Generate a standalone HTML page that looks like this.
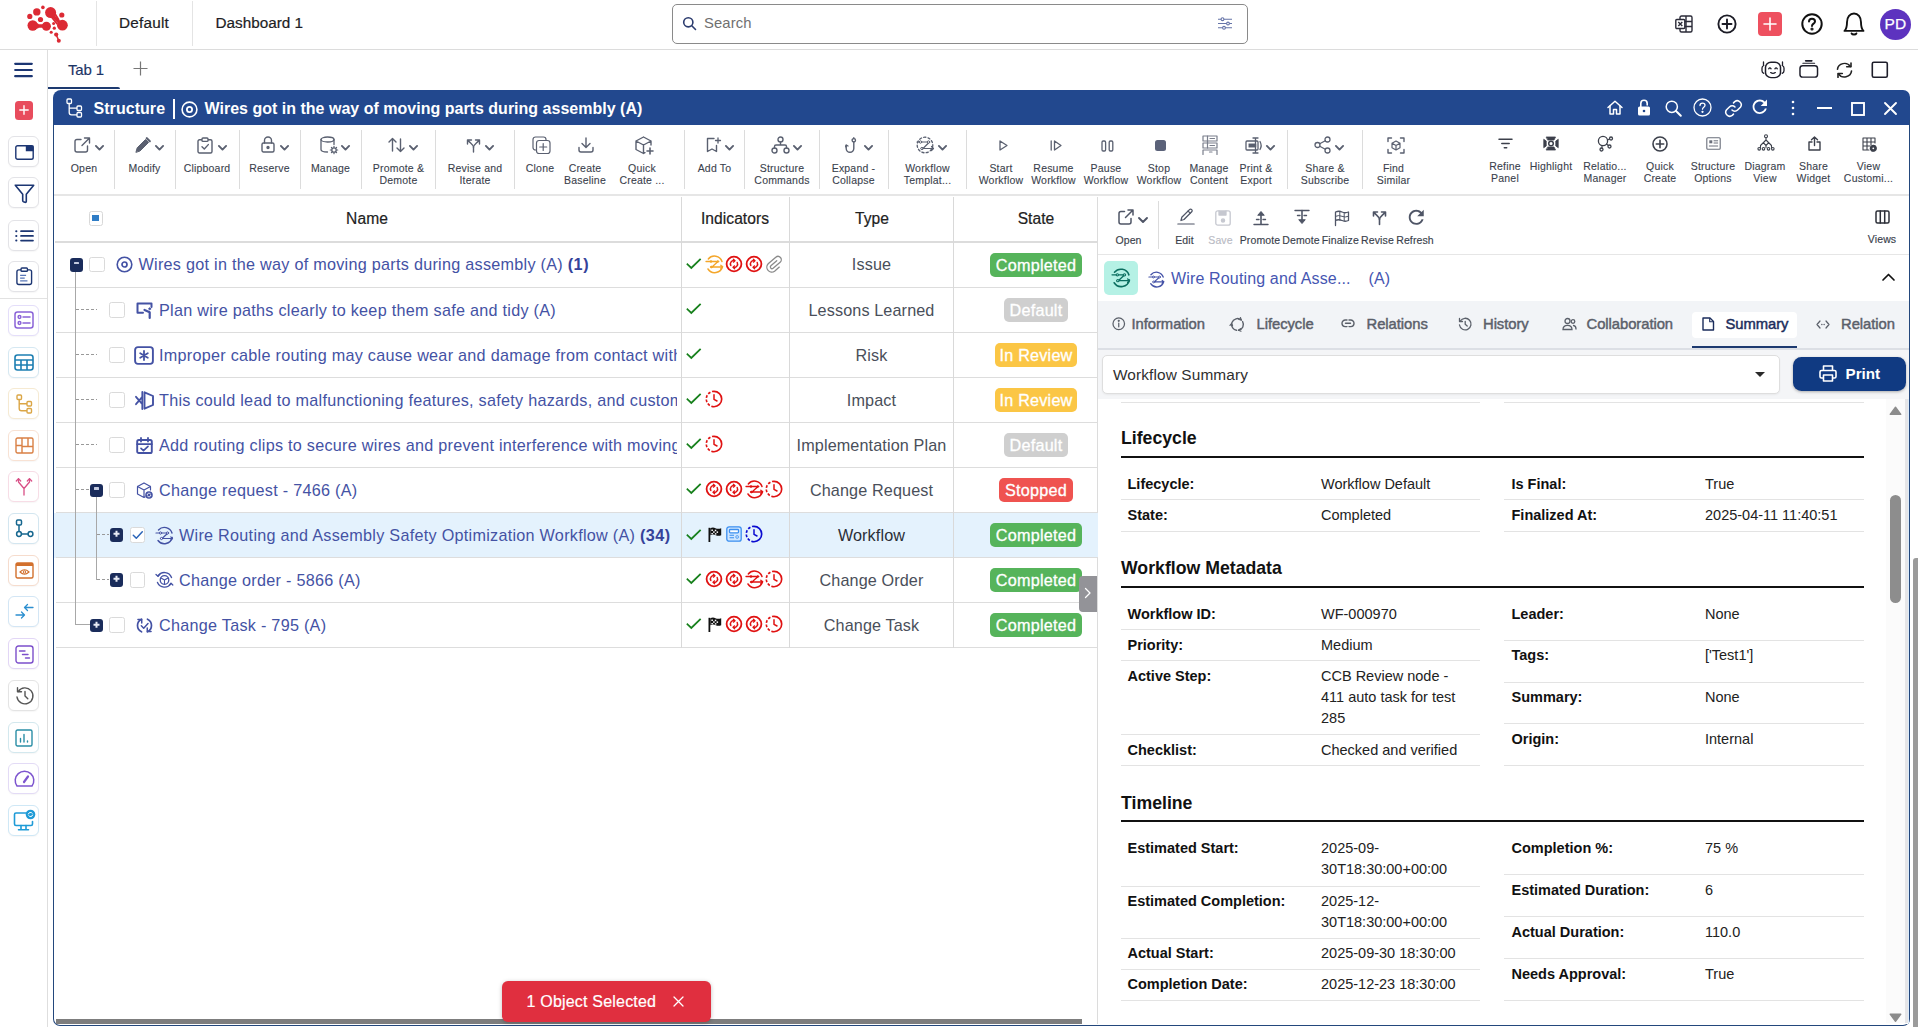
<!DOCTYPE html>
<html><head><meta charset="utf-8"><title>Structure</title>
<style>
*{box-sizing:border-box;margin:0;padding:0}
html,body{width:1918px;height:1027px;overflow:hidden;background:#fff;font-family:"Liberation Sans",sans-serif;color:#222}
.abs{position:absolute}
svg{position:absolute;overflow:visible}
.t{position:absolute;white-space:nowrap;line-height:1}
/* top bar */
#topbar{position:absolute;left:0;top:0;width:1918px;height:50px;border-bottom:1px solid #dcdcdc;background:#fff}
.vdiv{position:absolute;top:1px;width:1px;height:45px;background:#e4e4e4}
#search{position:absolute;left:672px;top:4px;width:576px;height:40px;border:1px solid #8a8a8a;border-radius:5px;background:#fff}
/* sidebar */
#side{position:absolute;left:0;top:50px;width:48px;height:977px;border-right:1px solid #dedede;background:#fff}
.sb{position:absolute;left:8.3px;width:31.2px;height:31px;border:1px solid #e3e3e7;border-radius:6px;background:#fff;box-shadow:0 1px 1.5px rgba(0,0,0,.04);margin-top:-.5px}
/* tab row */
#tabrow{position:absolute;left:48px;top:50px;width:1870px;height:40px;background:#fff}
/* widget */
#whead{position:absolute;left:53px;top:90px;width:1857px;height:34.5px;background:#22488e;border-radius:8px 7px 0 0}
#wbody{position:absolute;left:53px;top:120px;width:1857px;height:905.5px;border:1px solid #23477c;border-top:none;border-radius:0 0 7px 7px;}
#toolbar{position:absolute;left:54px;top:124.5px;width:1855px;height:71.5px;background:#fff;border-bottom:2.5px solid #e6e6e6}
.tl{position:absolute;font-size:10.5px;line-height:12px;text-align:center;color:#3d4250;letter-spacing:.2px;white-space:nowrap;transform:translateX(-50%);-webkit-text-stroke:.1px #3d4250}
.tsep{position:absolute;top:130px;width:1px;height:59px;background:#dcdcdc}
/* table */
#grid{position:absolute;left:56px;top:196px;width:1042px;height:452px}
.hl{position:absolute;left:56px;width:1042px;height:1px;background:#dddddd}
.vl{position:absolute;top:197px;width:2px;height:450px;background:#dedede}
.th{position:absolute;top:209.5px;font-size:15.6px;color:#222;transform:translateX(-50%);white-space:nowrap;letter-spacing:.05px;-webkit-text-stroke:.2px #222}
.nm{position:absolute;font-size:16.2px;color:#4452a4;white-space:nowrap;letter-spacing:.27px;line-height:20px}
.ty{position:absolute;font-size:16.2px;color:#4a4f5a;white-space:nowrap;letter-spacing:.12px;line-height:20px;transform:translateX(-50%);left:871.5px}
.badge{position:absolute;height:24px;border-radius:5px;color:#fff;font-size:16.2px;line-height:25px;text-align:center;letter-spacing:.22px;transform:translateX(-50%);left:1036px;white-space:nowrap;-webkit-text-stroke:.3px #fff}
.cb{position:absolute;width:16px;height:16px;border:1px solid #dadada;border-radius:2.5px;background:#fff}
.exp{position:absolute;width:13px;height:13.5px;border-radius:3px;background:#1a2c5b}
#nclip{position:absolute;left:0;top:243px;width:677px;height:405px;overflow:hidden}
/* right panel */
#rp{position:absolute;left:1097px;top:197px;width:811px;height:827px;background:#fff;border-left:1px solid #dcdcdc}
.rtl{position:absolute;font-size:10.5px;line-height:12px;color:#3d4250;white-space:nowrap;transform:translateX(-50%);letter-spacing:.12px}
.tab{position:absolute;top:315.5px;font-size:14.8px;line-height:17px;white-space:nowrap;letter-spacing:-.05px}
.sh{position:absolute;left:1121px;font-size:17.7px;line-height:20px;font-weight:bold;color:#111;white-space:nowrap}
.sl{position:absolute;left:1121px;width:743px;height:2px;background:#111}
.k{position:absolute;font-size:14.5px;font-weight:bold;color:#111;white-space:nowrap;line-height:21px}
.v{position:absolute;font-size:14.5px;color:#222;white-space:nowrap;line-height:21px}
.rl{position:absolute;height:1px;background:#e3e3e3}
</style></head>
<body>
<div id="topbar"></div>
<div id="side"></div>
<div id="tabrow"></div>
<div id="whead"></div>
<div id="wbody"></div>
<div id="toolbar"></div>
<div id="rp"></div>
<!-- logo -->
<svg style="left:24px;top:3px" width="48" height="44" viewBox="24 3 48 44" fill="#dc2a34" stroke="#dc2a34" stroke-linecap="round">
<circle cx="50.6" cy="12.6" r="5.5" stroke="none"/><circle cx="62.4" cy="25.2" r="5.4" stroke="none"/><path d="M52.500 15.500L60 23" stroke-width="3.200"/><path d="M54.500 13L58.500 19.500" stroke-width="1.800"/><path d="M51.500 17L57 23.800" stroke-width="1.800"/>
<circle cx="32.700" cy="25.500" r="5.200" stroke="none"/><circle cx="46.400" cy="26.200" r="4.500" stroke="none"/><path d="M33 26H46" stroke-width="3.600"/><path d="M35 23.300L38 24.500" stroke-width="1.500"/><path d="M35 28.500L38 27.600" stroke-width="1.500"/>
<g stroke="none"><circle cx="36.800" cy="11.900" r="3.700"/><circle cx="42.900" cy="7.400" r="1.800"/><circle cx="29.800" cy="16.400" r="2.600"/><circle cx="40.500" cy="19.500" r="2.600"/><circle cx="61.800" cy="15" r="2.600"/><circle cx="53.600" cy="23.400" r="1.500"/><circle cx="54.300" cy="28.200" r="1.600"/><circle cx="51.200" cy="32.300" r="1.550"/><circle cx="56.200" cy="34.600" r="2.100"/><circle cx="58.800" cy="40.700" r="2"/></g>
<path d="M56.200 34.600L58.800 40.700" stroke-width="1.500"/>
</svg>
<div class="vdiv" style="left:96px"></div><div class="vdiv" style="left:192px"></div>
<div class="t" style="left:119px;top:15px;font-size:15.3px;letter-spacing:.22px;color:#1d1d24;-webkit-text-stroke:.2px #1d1d24">Default</div>
<div class="t" style="left:215.5px;top:15px;font-size:15.3px;color:#1d1d24;-webkit-text-stroke:.2px #1d1d24">Dashboard 1</div>
<div id="search"></div>
<svg style="left:682px;top:16px" width="15" height="15" viewBox="0 0 15 15" fill="none" stroke="#2b3b6e" stroke-width="1.6" stroke-linecap="round"><circle cx="6.3" cy="6.3" r="4.6"/><path d="M9.8 9.8L13.5 13.5"/></svg>
<div class="t" style="left:704px;top:15.8px;font-size:14.8px;color:#707070;letter-spacing:.1px">Search</div>
<svg style="left:1218px;top:17px" width="14" height="13" viewBox="0 0 14 13" fill="none" stroke="#6674a8" stroke-width="1.1"><path d="M0 2.2H14M0 6.5H14M0 10.8H14"/><circle cx="4.5" cy="2.2" r="1.4" fill="#fff"/><circle cx="10" cy="6.5" r="1.4" fill="#fff"/><circle cx="6" cy="10.8" r="1.4" fill="#fff"/></svg>
<!-- right icons -->
<svg style="left:1675px;top:15px" width="18" height="18" viewBox="0 0 18 18" fill="none" stroke="#2b2b38" stroke-width="1.400"><rect x="5" y="1" width="12" height="16" rx="1.5"/><path d="M5 6.5H17M5 11.500H17M11 1V17"/><rect x="0.8" y="4.5" width="9" height="9" rx="1" fill="#fff"/><path d="M3.3 7L7.3 11M7.3 7L3.3 11"/></svg>
<svg style="left:1717px;top:13.800px" width="20" height="20" viewBox="0 0 20 20" fill="none" stroke="#1c1c26" stroke-width="1.900" stroke-linecap="round"><circle cx="10" cy="10" r="8.6"/><path d="M10 5.500V14.500M5.500 10H14.500"/></svg>
<div class="abs" style="left:1758px;top:12px;width:24px;height:24px;border-radius:4px;background:#ee505f"></div>
<svg style="left:1758px;top:12px" width="24" height="24" viewBox="0 0 24 24" fill="none" stroke="#fff" stroke-width="1.6" stroke-linecap="round"><path d="M12 6V18M6 12H18"/></svg>
<svg style="left:1800.500px;top:12.900px" width="22" height="22" viewBox="0 0 22 22" fill="none" stroke="#111" stroke-width="2" stroke-linecap="round"><circle cx="11" cy="11" r="9.700"/><path d="M8 8.600C8 6.800 9.300 5.800 11 5.800C12.800 5.800 14 6.900 14 8.400C14 10.600 11 10.700 11 13"/><circle cx="11" cy="16" r="0.600" fill="#111"/></svg>
<svg style="left:1842.500px;top:11.800px" width="22" height="24.500" preserveAspectRatio="none" viewBox="0 0 22 24" fill="none" stroke="#111" stroke-width="1.900" stroke-linecap="round" stroke-linejoin="round"><path d="M1.500 18.500C3.600 16.500 4 14.500 4 10C4 5 7 1.500 11 1.500C15 1.500 18 5 18 10C18 14.500 18.400 16.500 20.500 18.500Z"/><path d="M8.600 21C9.300 22.300 12.700 22.300 13.400 21"/></svg>
<div class="abs" style="left:1880px;top:8.500px;width:31px;height:31px;border-radius:50%;background:#5d33bf"></div>
<div class="t" style="left:1884.500px;top:15.500px;font-size:15.500px;color:#fff;letter-spacing:.2px;-webkit-text-stroke:.25px #fff">PD</div>

<svg style="left:14px;top:62px" width="19" height="16" viewBox="0 0 19 16" stroke="#1c3673" stroke-width="2.2" stroke-linecap="round"><path d="M1.200 1.800H17.800M1.200 8H17.800M1.200 14.200H17.800"/></svg>
<div class="abs" style="left:14.700px;top:100.800px;width:18.600px;height:19px;border-radius:3.500px;background:#e84c5d"></div>
<svg style="left:15px;top:101px" width="18" height="18" viewBox="0 0 18 18" stroke="#fff" stroke-width="1.4" stroke-linecap="round"><path d="M9 4.800V13.200M4.800 9H13.200"/></svg>
<div class="sb" style="top:136.500px"></div>
<svg style="left:14.500px;top:145px" width="19" height="15" viewBox="0 0 19 15" fill="none" stroke="#1c3673" stroke-width="1.400"><rect x=".8" y=".8" width="17.400" height="13.400" rx="1.800"/><path d="M11.500 1.200H17.800V5.500H11.500Z" fill="#1c3673"/></svg>
<div class="sb" style="top:177.500px"></div>
<svg style="left:13.500px;top:183.500px" width="21" height="20" viewBox="0 0 21 20" fill="none" stroke="#1c3673" stroke-width="1.600" stroke-linejoin="round" stroke-linecap="round"><path d="M1.300 1.200H19.700L12.300 10.300V17.300Q12.300 18.600 11 18.300L9.500 17.800Q8.700 17.500 8.700 16.500V10.300Z"/></svg>
<div class="sb" style="top:220px"></div>
<svg style="left:14.500px;top:229.500px" width="19" height="12" viewBox="0 0 19 12" stroke="#1c3673" stroke-width="1.700" stroke-linecap="round"><path d="M6 1.200H18M6 5.900H18M6 10.600H18"/><path d="M1.200 1.200H1.400M1.200 5.900H1.400M1.200 10.600H1.400" stroke-width="2"/></svg>
<div class="sb" style="top:261px"></div>
<svg style="left:16px;top:267px" width="16.500" height="18.500" viewBox="0 0 18 20" fill="none" stroke="#1c3673" stroke-width="1.500" stroke-linejoin="round"><rect x="1" y="3" width="16" height="16" rx="2.200"/><rect x="5.500" y="1" width="7" height="3.600" rx="1" fill="#fff"/><path d="M4.500 9H11M4.500 12H9.500M4.500 15H12.500" stroke-width="1.400" stroke="#5a78b8"/></svg>
<div class="abs" style="left:0;top:297.500px;width:47px;height:1px;background:#e2e2e2"></div>
<div class="sb" style="top:305px;border-color:#e4defa"></div>
<svg style="left:14px;top:311px" width="20" height="18" viewBox="0 0 20 18" fill="none" stroke="#8a63d8" stroke-width="1.500"><rect x="1" y="1" width="18" height="16" rx="2.500"/><circle cx="5.500" cy="6" r="1.400"/><circle cx="5.500" cy="12" r="1.400"/><path d="M9 6H16M9 12H16" stroke-linecap="round"/></svg>
<div class="sb" style="top:347px;border-color:#d5e8f2"></div>
<svg style="left:14px;top:353.500px" width="20" height="17" viewBox="0 0 20 17" fill="none" stroke="#1d7fb2" stroke-width="1.600"><rect x="1" y="1" width="18" height="15" rx="2.500"/><path d="M1 6H19M1 11H19M7 6V16M13 6V16"/></svg>
<div class="sb" style="top:388.500px;border-color:#f6ead2"></div>
<svg style="left:16px;top:394px" width="17" height="20" viewBox="0 0 17 20" fill="none" stroke="#dba646" stroke-width="1.400"><rect x="1" y="1" width="4.500" height="4.500" rx="1"/><rect x="11" y="7.500" width="4.500" height="4.500" rx="1"/><rect x="11" y="14.500" width="4.500" height="4.500" rx="1"/><path d="M3.200 5.500V14.500Q3.200 16.800 5.500 16.800H11M3.200 9.800H11"/></svg>
<div class="sb" style="top:430px;border-color:#f8e2d4"></div>
<svg style="left:15px;top:437px" width="19" height="17" viewBox="0 0 19 17" fill="none" stroke="#d98045" stroke-width="1.400"><rect x="1" y="1" width="17" height="15" rx="1.500"/><path d="M7 1V16M13 1V9.500M1 8.500H7M7 9.500H18"/></svg>
<div class="sb" style="top:471.500px;border-color:#f7dde6"></div>
<svg style="left:15px;top:477px" width="18" height="19" viewBox="0 0 18 19" fill="none" stroke="#d94f86" stroke-width="1.300" stroke-linecap="round" stroke-linejoin="round"><path d="M9 18V11.500L3.500 5V2M9 11.500L14.500 5V2" /><path d="M1.300 4L3.500 1.600L5.700 4M12.300 4L14.500 1.600L16.700 4"/></svg>
<div class="sb" style="top:513px;border-color:#d3e6f0"></div>
<svg style="left:15px;top:518.500px" width="19" height="20" viewBox="0 0 19 20" fill="none" stroke="#17678f" stroke-width="1.500"><rect x="1.500" y="1" width="5" height="5" rx="1.200"/><circle cx="4" cy="15" r="2.400"/><circle cx="15.500" cy="15" r="2.400"/><path d="M4 6V12.600M6.400 15H13.100"/></svg>
<div class="sb" style="top:555px;border-color:#f6dccd"></div>
<svg style="left:14.500px;top:562px" width="19" height="17" viewBox="0 0 19 17" fill="none" stroke="#d2702d" stroke-width="1.400"><rect x="1" y="1" width="17" height="15" rx="1.500"/><path d="M1 2.500H18" stroke-width="3"/><path d="M5 10Q9.500 5.500 14 10Q9.500 14.500 5 10Z" stroke-width="1.100"/><circle cx="9.500" cy="10" r="1.200" stroke-width="1"/></svg>
<div class="sb" style="top:596.500px;border-color:#d3e6f5"></div>
<svg style="left:15px;top:603px" width="19" height="17" viewBox="0 0 19 17" fill="none" stroke="#2c8fd0" stroke-width="1.300" stroke-linecap="round" stroke-linejoin="round"><path d="M9.500 4.500H18M9.500 4.500L12.500 1.500M9.500 4.500L12.500 7.500"/><path d="M1 12H9.500M9.500 12L6.500 9M9.500 12L6.500 15"/></svg>
<div class="sb" style="top:638.500px;border-color:#e2d6f6"></div>
<svg style="left:15px;top:644.500px" width="19" height="19" viewBox="0 0 19 19" fill="none" stroke="#7c4fcb" stroke-width="1.400" stroke-linecap="round"><rect x="1" y="1" width="17" height="17" rx="2.500"/><path d="M4.500 6H10M7.500 9.500H13M10.500 13H14.500"/></svg>
<div class="sb" style="top:680px;border-color:#e4e4e4"></div>
<svg style="left:14.500px;top:686px" width="19" height="19" viewBox="0 0 19 19" fill="none" stroke="#555" stroke-width="1.400" stroke-linecap="round" stroke-linejoin="round"><path d="M3.200 5.500A8 8 0 1 1 2 11"/><path d="M2.500 1.800V5.800H6.500"/><path d="M10 5.500V10L12.800 12.800"/></svg>
<div class="sb" style="top:722px;border-color:#d3e8ee"></div>
<svg style="left:15px;top:728.500px" width="18" height="18" viewBox="0 0 18 18" fill="none" stroke="#2a8ea6" stroke-width="1.400" stroke-linecap="round"><rect x="1" y="1" width="16" height="16" rx="1.500"/><path d="M5.500 13V9.500M9 13V5.500M12.500 13V12"/></svg>
<div class="sb" style="top:763.500px;border-color:#e3dbf6"></div>
<svg style="left:14px;top:771px" width="21" height="16" viewBox="0 0 21 16" fill="none" stroke="#7d55cf" stroke-width="1.500" stroke-linecap="round"><path d="M3 15H18A9.300 9.300 0 1 0 3 15Z" stroke-linejoin="round"/><path d="M10 11L14 5.500" stroke-width="2.200"/></svg>
<div class="sb" style="top:805px;border-color:#cfe8f6"></div>
<svg style="left:13px;top:809px" width="23" height="22" viewBox="0 0 23 22" fill="none" stroke="#1e9bd7" stroke-width="1.600" stroke-linecap="round"><path d="M13 4H3Q1.500 4 1.500 5.500V15Q1.500 16.500 3 16.500H18Q19.500 16.500 19.500 15V12.500"/><path d="M8 16.500V20.500M13 16.500V20.500M5.500 20.800H15.500"/><circle cx="17.500" cy="5.500" r="4.800" fill="#1e9bd7" stroke="none"/><path d="M15.300 5A2.300 2.300 0 0 1 19.300 4.300M19.700 6A2.300 2.300 0 0 1 15.700 6.700" stroke="#fff" stroke-width="1"/></svg>

<div class="t" style="left:68px;top:62px;font-size:15px;color:#1c3566;letter-spacing:-.15px;-webkit-text-stroke:.15px #1c3566">Tab 1</div>
<div class="abs" style="left:48px;top:87px;width:72px;height:2px;background:#1d3a70;border-radius:0 2px 0 0"></div>
<svg style="left:132.500px;top:61px" width="15" height="15" viewBox="0 0 15 15" stroke="#777" stroke-width="1.200"><path d="M7.500 0.500V14.500M0.500 7.500H14.500"/></svg>
<!-- robot -->
<svg style="left:1760.500px;top:60.700px" width="24" height="17.800" preserveAspectRatio="none" viewBox="0 0 24 19" fill="none" stroke="#1e1e2a" stroke-width="1.500" stroke-linecap="round"><rect x="4.500" y="1.300" width="15" height="16.400" rx="5.500"/><path d="M2.800 4.800Q1 5.500 1 7.500V10.500Q1 12.500 2.800 13.200M21.200 4.800Q23 5.500 23 7.500V10.500Q23 12.500 21.200 13.200M2.500 1V5M21.500 1V5" stroke-width="1.300"/><path d="M7.700 8.300Q8.900 6.600 10.100 8.300M13.900 8.300Q15.100 6.600 16.300 8.300" stroke-width="1.300"/><path d="M9.700 12.300Q12 14.300 14.300 12.300" stroke-width="1.300"/></svg>
<!-- stack -->
<svg style="left:1798.500px;top:60.200px" width="19.500" height="18.300" preserveAspectRatio="none" viewBox="0 0 20 19" fill="none" stroke="#1e1e2a" stroke-width="1.500" stroke-linecap="round"><rect x="1" y="6" width="18" height="11.800" rx="2.800"/><path d="M4 3.400H16" stroke-width="1.200"/><path d="M6.800 .9H13.200" stroke-width="1.600"/></svg>
<!-- refresh -->
<svg style="left:1834.500px;top:61.800px" width="19" height="16.300" preserveAspectRatio="none" viewBox="0 0 19 18" fill="none" stroke="#222" stroke-width="1.600" stroke-linecap="round" stroke-linejoin="round"><path d="M2.500 8A7 7 0 0 1 15.500 5"/><path d="M16 1V5.300H11.700"/><path d="M16.500 10A7 7 0 0 1 3.500 13"/><path d="M3 17V12.700H7.300"/></svg>
<!-- square -->
<svg style="left:1871.300px;top:60.500px" width="18" height="18" viewBox="0 0 18 18" fill="none" stroke="#1e1e2a" stroke-width="1.600"><rect x="1.300" y="1.300" width="15" height="15" rx="1.500"/></svg>

<svg style="left:66px;top:98px" width="17" height="20" viewBox="0 0 17 20" fill="none" stroke="#fff" stroke-width="1.300"><rect x="1" y="1" width="4.500" height="4.500" rx="1"/><rect x="11" y="8" width="4.500" height="4.500" rx="1"/><rect x="11" y="14.500" width="4.500" height="4.500" rx="1"/><path d="M3.200 5.500V14.500Q3.200 16.800 5.500 16.800H11M3.200 10.200H11"/></svg>
<div class="t" style="left:93.500px;top:101.300px;font-size:16px;font-weight:bold;color:#fff;letter-spacing:.05px">Structure</div>
<div class="abs" style="left:172.500px;top:99px;width:2px;height:20px;background:#fff"></div>
<svg style="left:180.500px;top:100.500px" width="17" height="17" viewBox="0 0 17 17" fill="none" stroke="#fff" stroke-width="1.600"><circle cx="8.500" cy="8.500" r="7.400"/><circle cx="8.500" cy="8.500" r="2.600" stroke-width="1.800"/></svg>
<div class="t" style="left:204.500px;top:101.300px;font-size:16px;font-weight:bold;color:#fff;letter-spacing:.01px">Wires got in the way of moving parts during assembly (A)</div>
<!-- header icons -->
<svg style="left:1607px;top:100px" width="16" height="15" viewBox="0 0 16 15" fill="none" stroke="#fff" stroke-width="1.500" stroke-linejoin="round" stroke-linecap="round"><path d="M1 7.500L8 1.200L15 7.500"/><path d="M3 6V14H6.500V9.500H9.500V14H13V6"/></svg>
<svg style="left:1637px;top:98.500px" width="14" height="17" viewBox="0 0 14 17" fill="none" stroke="#fff" stroke-width="1.600" stroke-linecap="round"><path d="M3.800 8V4.500A3.200 3.200 0 0 1 10.200 4.500V6"/><rect x="1" y="7.500" width="12" height="9" rx="1.500" fill="#fff" stroke="none"/><circle cx="7" cy="12" r="1.300" fill="#20468c" stroke="none"/></svg>
<svg style="left:1665px;top:100px" width="17" height="17" viewBox="0 0 17 17" fill="none" stroke="#fff" stroke-width="1.500" stroke-linecap="round"><circle cx="6.800" cy="6.800" r="5.600"/><path d="M11 11L15.800 15.800" stroke-width="2"/></svg>
<svg style="left:1692.500px;top:97.500px" width="19" height="19" viewBox="0 0 19 19" fill="none" stroke="#fff" stroke-width="1.300" stroke-linecap="round"><circle cx="9.500" cy="9.500" r="8.500"/><path d="M7 7.500C7 6 8 5.200 9.500 5.200C11 5.200 12 6.100 12 7.300C12 9.200 9.500 9.200 9.500 11.200"/><circle cx="9.500" cy="13.800" r="0.500" fill="#fff"/></svg>
<svg style="left:1724px;top:99px" width="19" height="19" viewBox="0 0 19 19" fill="none" stroke="#fff" stroke-width="1.500" stroke-linecap="round"><path d="M8 11A4 4 0 0 0 13.600 11L16.400 8.200A4 4 0 0 0 10.800 2.600L9.500 3.900"/><path d="M11 8A4 4 0 0 0 5.400 8L2.600 10.800A4 4 0 0 0 8.200 16.400L9.500 15.100"/></svg>
<svg style="left:1749px;top:95.800px" width="21.600" height="21.600" viewBox="0 0 24 24" fill="#fff"><path d="M17.650 6.350C16.200 4.900 14.210 4 12 4c-4.420 0-7.990 3.580-7.990 8s3.570 8 7.990 8c3.730 0 6.840-2.550 7.730-6h-2.080c-.82 2.330-3.040 4-5.650 4-3.310 0-6-2.690-6-6s2.690-6 6-6c1.660 0 3.140.690 4.220 1.780L13 11h7V4l-2.350 2.350z"/></svg>
<svg style="left:1790.500px;top:100px" width="4" height="16" viewBox="0 0 4 16" fill="#fff"><circle cx="2" cy="2" r="1.300"/><circle cx="2" cy="8" r="1.300"/><circle cx="2" cy="14" r="1.300"/></svg>
<div class="abs" style="left:1817px;top:107px;width:15px;height:2px;background:#fff"></div>
<svg style="left:1851px;top:101.500px" width="14" height="14" viewBox="0 0 14 14" fill="none" stroke="#fff" stroke-width="1.900"><rect x="1" y="1" width="12" height="12"/></svg>
<svg style="left:1884px;top:102px" width="13" height="13" viewBox="0 0 13 13" stroke="#fff" stroke-width="1.900" stroke-linecap="round"><path d="M1 1L12 12M12 1L1 12"/></svg>

<svg style="left:74px;top:137px" width="17" height="16" viewBox="0 0 17 16" fill="none" stroke="#5a6070" stroke-width="1.4" stroke-linecap="round" stroke-linejoin="round" ><path d="M7 2.500H3Q1 2.500 1 4.500V13Q1 15 3 15H11.500Q13.500 15 13.500 13V9"/><path d="M8 8.500L15.500 1M10.500 1H15.500V6"/></svg>
<svg style="left:94.5px;top:145px" width="9" height="6" viewBox="0 0 9 6" fill="none" stroke="#5a6070" stroke-width="1.900" stroke-linecap="round" stroke-linejoin="round"><path d="M0.900 0.900L4.500 4.600L8.100 0.900"/></svg>
<div class="tl" style="left:84px;top:161.7px;color:#3a3f4c">Open</div>
<div class="tsep" style="left:114px"></div>
<svg style="left:135px;top:137px" width="17" height="16" viewBox="0 0 17 16" fill="none" stroke="#5a6070" stroke-width="1" stroke-linecap="round" stroke-linejoin="round" ><path d="M1 15L2.200 10.800L10.500 2.500L13.500 5.500L5.200 13.800Z" fill="#5a6070"/><path d="M11.800 1.200L14.800 4.200" stroke-width="2.200"/></svg>
<svg style="left:154.5px;top:145px" width="9" height="6" viewBox="0 0 9 6" fill="none" stroke="#5a6070" stroke-width="1.900" stroke-linecap="round" stroke-linejoin="round"><path d="M0.900 0.900L4.500 4.600L8.100 0.900"/></svg>
<div class="tl" style="left:144.5px;top:161.7px;color:#3a3f4c">Modify</div>
<div class="tsep" style="left:175px"></div>
<svg style="left:197px;top:136.5px" width="16" height="17" viewBox="0 0 16 17" fill="none" stroke="#5a6070" stroke-width="1.4" stroke-linecap="round" stroke-linejoin="round" ><rect x="1" y="2.800" width="14" height="13.200" rx="1.500"/><rect x="5" y="1" width="6" height="3.400" rx="1" fill="#fff"/><path d="M5 9.800L7.300 12L11.300 7.600"/></svg>
<svg style="left:217.5px;top:145px" width="9" height="6" viewBox="0 0 9 6" fill="none" stroke="#5a6070" stroke-width="1.900" stroke-linecap="round" stroke-linejoin="round"><path d="M0.900 0.900L4.500 4.600L8.100 0.900"/></svg>
<div class="tl" style="left:207px;top:161.7px;color:#3a3f4c">Clipboard</div>
<div class="tsep" style="left:239px"></div>
<svg style="left:261px;top:136px" width="14" height="17" viewBox="0 0 14 17" fill="none" stroke="#5a6070" stroke-width="1.4" stroke-linecap="round" stroke-linejoin="round" ><rect x="1" y="7" width="12" height="9" rx="1.500"/><path d="M3.500 7V4.500A3.500 3.500 0 0 1 10.500 4.500V7"/><circle cx="7" cy="11.500" r="1" fill="#5a6070"/></svg>
<svg style="left:279.5px;top:145px" width="9" height="6" viewBox="0 0 9 6" fill="none" stroke="#5a6070" stroke-width="1.900" stroke-linecap="round" stroke-linejoin="round"><path d="M0.900 0.900L4.500 4.600L8.100 0.900"/></svg>
<div class="tl" style="left:269.5px;top:161.7px;color:#3a3f4c">Reserve</div>
<div class="tsep" style="left:300px"></div>
<svg style="left:320px;top:136px" width="19" height="19" viewBox="0 0 19 19" fill="none" stroke="#5a6070" stroke-width="1.3" stroke-linecap="round" stroke-linejoin="round" ><ellipse cx="7.500" cy="3.500" rx="6.500" ry="2.500"/><path d="M1 3.500V13.500C1 15 4 16 7.500 16M14 3.500V8.500"/><circle cx="14" cy="14" r="2.200"/><path d="M14 10.300V11.300M14 16.700V17.700M10.300 14H11.300M16.700 14H17.700M11.400 11.400L12.100 12.100M15.900 15.900L16.600 16.600M11.400 16.600L12.100 15.900M15.900 12.100L16.600 11.400" stroke-width="1.200"/></svg>
<svg style="left:341px;top:145px" width="9" height="6" viewBox="0 0 9 6" fill="none" stroke="#5a6070" stroke-width="1.900" stroke-linecap="round" stroke-linejoin="round"><path d="M0.900 0.900L4.500 4.600L8.100 0.900"/></svg>
<div class="tl" style="left:330.5px;top:161.7px;color:#3a3f4c">Manage</div>
<div class="tsep" style="left:361px"></div>
<svg style="left:388px;top:137px" width="17" height="16" viewBox="0 0 17 16" fill="none" stroke="#5a6070" stroke-width="1.4" stroke-linecap="round" stroke-linejoin="round" ><path d="M4.500 14V1.500M1 5L4.500 1.500L8 5"/><path d="M12.500 2V14.500M9 11L12.500 14.500L16 11"/></svg>
<svg style="left:408.5px;top:145px" width="9" height="6" viewBox="0 0 9 6" fill="none" stroke="#5a6070" stroke-width="1.900" stroke-linecap="round" stroke-linejoin="round"><path d="M0.900 0.900L4.500 4.600L8.100 0.900"/></svg>
<div class="tl" style="left:398.5px;top:161.7px;color:#3a3f4c">Promote &<br>Demote</div>
<div class="tsep" style="left:435px"></div>
<svg style="left:466px;top:137.5px" width="15" height="15" viewBox="0 0 15 15" fill="none" stroke="#5a6070" stroke-width="1.4" stroke-linecap="round" stroke-linejoin="round" ><path d="M7.500 14V9.500C7.500 6.500 4.500 5.500 2 2.500M1.500 6V2H5.500"/><path d="M7.500 9.500C7.500 6.500 10.500 5.500 13 2.500M9.500 2H13.500V6"/></svg>
<svg style="left:484.5px;top:145px" width="9" height="6" viewBox="0 0 9 6" fill="none" stroke="#5a6070" stroke-width="1.900" stroke-linecap="round" stroke-linejoin="round"><path d="M0.900 0.900L4.500 4.600L8.100 0.900"/></svg>
<div class="tl" style="left:475px;top:161.7px;color:#3a3f4c">Revise and<br>Iterate</div>
<div class="tsep" style="left:514px"></div>
<svg style="left:531.5px;top:136px" width="19" height="18" viewBox="0 0 19 18" fill="none" stroke="#5a6070" stroke-width="1.2" stroke-linecap="round" stroke-linejoin="round" ><rect x="1" y="1" width="13" height="13" rx="2.500"/><rect x="4.500" y="4.500" width="13.500" height="13" rx="2.500" fill="#fff"/><path d="M11.200 7.500V14.500M7.700 11H14.700"/></svg>
<div class="tl" style="left:540px;top:161.7px;color:#3a3f4c">Clone</div>
<svg style="left:578px;top:137px" width="16" height="16" viewBox="0 0 16 16" fill="none" stroke="#5a6070" stroke-width="1.4" stroke-linecap="round" stroke-linejoin="round" ><path d="M8 1V10M4 6.500L8 10.500L12 6.500"/><path d="M1 10.500V13Q1 15 3 15H13Q15 15 15 13V10.500"/></svg>
<div class="tl" style="left:585px;top:161.7px;color:#3a3f4c">Create<br>Baseline</div>
<svg style="left:635px;top:135.5px" width="19" height="19" viewBox="0 0 19 19" fill="none" stroke="#5a6070" stroke-width="1.4" stroke-linecap="round" stroke-linejoin="round" ><path d="M8.500 1L16 5V9M8.500 1L1 5V13.500L8.500 17.500L10 16.700M1 5L8.500 9L16 5M8.500 9V17.500"/><path d="M15 12V18M12 15H18" stroke-width="1.600"/></svg>
<div class="tl" style="left:642px;top:161.7px;color:#3a3f4c">Quick<br>Create ...</div>
<div class="tsep" style="left:684px"></div>
<svg style="left:705.5px;top:137px" width="15" height="16" viewBox="0 0 15 16" fill="none" stroke="#5a6070" stroke-width="1.4" stroke-linecap="round" stroke-linejoin="round" ><path d="M8 1.500H1.500V14.500L6 12L10.500 14.500V8.500"/><path d="M12 1V6M9.500 3.500H14.500" stroke-width="1.300"/></svg>
<svg style="left:724.5px;top:145px" width="9" height="6" viewBox="0 0 9 6" fill="none" stroke="#5a6070" stroke-width="1.900" stroke-linecap="round" stroke-linejoin="round"><path d="M0.900 0.900L4.500 4.600L8.100 0.900"/></svg>
<div class="tl" style="left:714.5px;top:161.7px;color:#3a3f4c">Add To</div>
<div class="tsep" style="left:744px"></div>
<svg style="left:770.5px;top:136px" width="19" height="18" viewBox="0 0 19 18" fill="none" stroke="#5a6070" stroke-width="1.4" stroke-linecap="round" stroke-linejoin="round" ><circle cx="9.500" cy="3.500" r="2.500"/><circle cx="3.500" cy="14.500" r="2.500"/><circle cx="15.500" cy="14.500" r="2.500"/><path d="M9.500 6V9M3.500 12V10.500Q3.500 9 5 9H14Q15.500 9 15.500 10.500V12"/></svg>
<svg style="left:792.8px;top:145px" width="9" height="6" viewBox="0 0 9 6" fill="none" stroke="#5a6070" stroke-width="1.900" stroke-linecap="round" stroke-linejoin="round"><path d="M0.900 0.900L4.500 4.600L8.100 0.900"/></svg>
<div class="tl" style="left:782px;top:161.7px;color:#3a3f4c">Structure<br>Commands</div>
<div class="tsep" style="left:819px"></div>
<svg style="left:844.5px;top:136.5px" width="13" height="17" viewBox="0 0 13 17" fill="none" stroke="#5a6070" stroke-width="1.4" stroke-linecap="round" stroke-linejoin="round" ><circle cx="8.800" cy="3.300" r="1.700"/><path d="M8.800 5V11.500A3.800 3.800 0 0 1 1.200 11.500V8.500M8.800 1.600V0.700"/><path d="M0.700 9.800L1.200 8L3 9"/></svg>
<svg style="left:863.5px;top:145px" width="9" height="6" viewBox="0 0 9 6" fill="none" stroke="#5a6070" stroke-width="1.900" stroke-linecap="round" stroke-linejoin="round"><path d="M0.900 0.900L4.500 4.600L8.100 0.900"/></svg>
<div class="tl" style="left:853.5px;top:161.7px;color:#3a3f4c">Expand -<br>Collapse</div>
<div class="tsep" style="left:888px"></div>
<svg style="left:915.5px;top:136px" width="19" height="18" viewBox="0 0 19 18" fill="none" stroke="#5a6070" stroke-width="1.3" stroke-linecap="round" stroke-linejoin="round" ><circle cx="9" cy="9" r="7.800" stroke-dasharray="2.200 2.200"/><path d="M1 6H11.500M13.500 6L7 12.500M5 12.500H17.500M15.500 10.500L17.500 12.500L15.500 14.500" stroke-width="1.200"/><circle cx="4.500" cy="6" r="1.200" fill="#fff" stroke-width="1"/><circle cx="12.500" cy="6" r="1.200" fill="#fff" stroke-width="1"/><circle cx="6" cy="12.500" r="1.200" fill="#fff" stroke-width="1"/></svg>
<svg style="left:938px;top:145px" width="9" height="6" viewBox="0 0 9 6" fill="none" stroke="#5a6070" stroke-width="1.900" stroke-linecap="round" stroke-linejoin="round"><path d="M0.900 0.900L4.500 4.600L8.100 0.900"/></svg>
<div class="tl" style="left:927.5px;top:161.7px;color:#3a3f4c">Workflow<br>Templat...</div>
<div class="tsep" style="left:966px"></div>
<svg style="left:998.5px;top:140px" width="9" height="11" viewBox="0 0 9 11" fill="none" stroke="#5a6070" stroke-width="1.3" stroke-linecap="round" stroke-linejoin="round" ><path d="M1 1L8 5.500L1 10Z"/></svg>
<div class="tl" style="left:1001px;top:161.7px;color:#3a3f4c">Start<br>Workflow</div>
<svg style="left:1049.5px;top:140px" width="12" height="11" viewBox="0 0 12 11" fill="none" stroke="#5a6070" stroke-width="1.3" stroke-linecap="round" stroke-linejoin="round" ><path d="M1.200 1V10"/><path d="M4.500 1L11 5.500L4.500 10Z"/></svg>
<div class="tl" style="left:1053.5px;top:161.7px;color:#3a3f4c">Resume<br>Workflow</div>
<svg style="left:1100.5px;top:139.5px" width="13" height="12" viewBox="0 0 13 12" fill="none" stroke="#5a6070" stroke-width="1.3" stroke-linecap="round" stroke-linejoin="round" ><rect x="1" y="1" width="3.600" height="10" rx="1.200"/><rect x="8.200" y="1" width="3.600" height="10" rx="1.200"/></svg>
<div class="tl" style="left:1106px;top:161.7px;color:#3a3f4c">Pause<br>Workflow</div>
<div class="abs" style="left:1154.500px;top:140px;width:11px;height:10.500px;border-radius:2.500px;background:#5b6279"></div>
<div class="tl" style="left:1159px;top:161.7px;color:#3a3f4c">Stop<br>Workflow</div>
<svg style="left:1202px;top:135px" width="16" height="20" viewBox="0 0 16 20" fill="none" stroke="#7a7f8c" stroke-width="1.2" stroke-linecap="round" stroke-linejoin="round" ><rect x="1" y="1" width="14" height="5" /><rect x="1" y="8" width="14" height="5"/><path d="M1 19.500V15H15V19.500M5.500 1V13M8 3.500H12.500M8 10.500H12.500M7.500 17H10" /></svg>
<div class="tl" style="left:1209px;top:161.7px;color:#3a3f4c">Manage<br>Content</div>
<svg style="left:1245px;top:136.5px" width="18" height="17" viewBox="0 0 18 17" fill="none" stroke="#5a6070" stroke-width="1.3" stroke-linecap="round" stroke-linejoin="round" ><rect x="1" y="4" width="12" height="9" rx="1"/><path d="M4 6.800H11V10.200H4Z" fill="#5a6070" stroke-width=".5"/><path d="M8 1H13M10.500 1V16M8 16H13"/><path d="M15 4.500Q17.300 8.500 15 12.500"/></svg>
<svg style="left:1265.5px;top:145px" width="9" height="6" viewBox="0 0 9 6" fill="none" stroke="#5a6070" stroke-width="1.900" stroke-linecap="round" stroke-linejoin="round"><path d="M0.900 0.900L4.500 4.600L8.100 0.900"/></svg>
<div class="tl" style="left:1256px;top:161.7px;color:#3a3f4c">Print &<br>Export</div>
<div class="tsep" style="left:1287px"></div>
<svg style="left:1314px;top:136px" width="17" height="18" viewBox="0 0 17 18" fill="none" stroke="#5a6070" stroke-width="1.3" stroke-linecap="round" stroke-linejoin="round" ><circle cx="13.500" cy="3.500" r="2.500"/><circle cx="3.500" cy="9" r="2.500"/><circle cx="13.500" cy="14.500" r="2.500"/><path d="M5.700 7.800L11.300 4.700M5.700 10.200L11.300 13.300"/></svg>
<svg style="left:1334.5px;top:145px" width="9" height="6" viewBox="0 0 9 6" fill="none" stroke="#5a6070" stroke-width="1.900" stroke-linecap="round" stroke-linejoin="round"><path d="M0.900 0.900L4.500 4.600L8.100 0.900"/></svg>
<div class="tl" style="left:1325px;top:161.7px;color:#3a3f4c">Share &<br>Subscribe</div>
<div class="tsep" style="left:1362px"></div>
<svg style="left:1386.5px;top:136.5px" width="18" height="17" viewBox="0 0 18 17" fill="none" stroke="#5a6070" stroke-width="1.4" stroke-linecap="round" stroke-linejoin="round" ><path d="M1 4.500V1H4.500M13.500 1H17V4.500M17 12.500V16H13.500M4.500 16H1V12.500"/><path d="M9 4L13 6.200V10.800L9 13L5 10.800V6.200ZM5 6.200L9 8.500L13 6.200M9 8.500V13" stroke-width="1.200"/></svg>
<div class="tl" style="left:1393.5px;top:161.7px;color:#3a3f4c">Find<br>Similar</div>
<svg style="left:1497.5px;top:137.7px" width="15" height="11" viewBox="0 0 15 11" fill="none" stroke="#3c404b" stroke-width="1.5" stroke-linecap="round" stroke-linejoin="round" ><path d="M1 1.200H14M3.800 5.500H11.200M6.300 9.700H8.700" /></svg>
<div class="tl" style="left:1505px;top:159.8px;color:#3a3f4c">Refine<br>Panel</div>
<svg style="left:1543px;top:135.7px" width="16" height="15" viewBox="0 0 16 15" fill="none" stroke="#3c404b" stroke-width="1.4" stroke-linecap="round" stroke-linejoin="round" ><path d="M3.500 1H12.500L11 4H5ZM3.500 14H12.500L11 11H5ZM1 3.500L3.200 5V10L1 11.500ZM15 3.500L12.800 5V10L15 11.500Z" fill="#3c404b" stroke-width=".8"/><circle cx="8" cy="7.500" r="2.300" stroke-width="1.500"/></svg>
<div class="tl" style="left:1551px;top:159.8px;color:#3a3f4c">Highlight</div>
<svg style="left:1597px;top:134.7px" width="17" height="17" viewBox="0 0 17 17" fill="none" stroke="#3c404b" stroke-width="1.3" stroke-linecap="round" stroke-linejoin="round" ><circle cx="6" cy="6" r="4.600"/><circle cx="14" cy="3.500" r="1.500"/><circle cx="12.500" cy="11.500" r="1.500"/><circle cx="4.500" cy="14.500" r="1.500"/><path d="M10.500 5L12.500 4M9.500 9L11.300 10.500M5 10.600V13" stroke-width="1.100"/></svg>
<div class="tl" style="left:1605px;top:159.8px;color:#3a3f4c">Relatio...<br>Manager</div>
<svg style="left:1652px;top:135.7px" width="16" height="16" viewBox="0 0 16 16" fill="none" stroke="#3c404b" stroke-width="1.6" stroke-linecap="round" stroke-linejoin="round" ><circle cx="8" cy="8" r="7"/><path d="M8 4.300V11.700M4.300 8H11.700"/></svg>
<div class="tl" style="left:1660px;top:159.8px;color:#3a3f4c">Quick<br>Create</div>
<svg style="left:1705.5px;top:136.7px" width="15" height="13" viewBox="0 0 15 13" fill="none" stroke="#6a6f7b" stroke-width="1.1" stroke-linecap="round" stroke-linejoin="round" ><rect x=".8" y=".8" width="13.400" height="11.400" rx="1"/><rect x="3.300" y="3.300" width="3" height="3" fill="#6a6f7b" stroke="none"/><path d="M8 3.800H11.700M8 6H11.700M3.300 9H11.700" stroke-width="1"/></svg>
<div class="tl" style="left:1713px;top:159.8px;color:#3a3f4c">Structure<br>Options</div>
<svg style="left:1757px;top:133.7px" width="18" height="17" viewBox="0 0 18 17" fill="none" stroke="#3c404b" stroke-width="1.1" stroke-linecap="round" stroke-linejoin="round" ><circle cx="9" cy="2.300" r="1.500"/><path d="M9 3.800V6M9 6L3.500 11.500M9 6L14.500 11.500M6.300 8.700L9 11.500L11.700 8.700M3.500 11.500V13.500M9 11.500V13.500M14.500 11.500V13.500" stroke-width="1.100"/><circle cx="2.200" cy="14.800" r="1.300"/><circle cx="6.500" cy="14.800" r="1.300"/><circle cx="11.500" cy="14.800" r="1.300"/><circle cx="15.800" cy="14.800" r="1.300"/></svg>
<div class="tl" style="left:1765px;top:159.8px;color:#3a3f4c">Diagram<br>View</div>
<svg style="left:1807.5px;top:135.7px" width="13" height="15" viewBox="0 0 13 15" fill="none" stroke="#3c404b" stroke-width="1.4" stroke-linecap="round" stroke-linejoin="round" ><path d="M4 6H1V14H12V6H9"/><path d="M6.500 9.500V1M3.500 3.800L6.500 1L9.500 3.800"/></svg>
<div class="tl" style="left:1813.5px;top:159.8px;color:#3a3f4c">Share<br>Widget</div>
<svg style="left:1862px;top:136.7px" width="15" height="15" viewBox="0 0 15 15" fill="none" stroke="#3c404b" stroke-width="1.4" stroke-linecap="round" stroke-linejoin="round" ><path d="M13 6V1H1V13H7M1 5H13M1 9H8M5 1V13M9 1V8" stroke-width="1.100"/><circle cx="11.300" cy="11.300" r="2.600" fill="#3c404b" stroke-width="2" stroke-dasharray="1.200 1"/><circle cx="11.300" cy="11.300" r=".9" fill="#fff" stroke="none"/></svg>
<div class="tl" style="left:1868.5px;top:159.8px;color:#3a3f4c">View<br>Customi...</div>
<div class="abs" style="left:54px;top:513px;width:1044px;height:44.500px;background:#e4f2fd"></div>
<div class="abs" style="left:55px;top:241px;width:1043px;height:2px;background:#dcdcdc"></div>
<div class="cb" style="left:88.500px;top:210.500px;width:14px;height:15px;border-color:#d8d8d8"></div><div class="abs" style="left:92px;top:215px;width:7px;height:6px;background:#2f7dc6"></div>
<div class="th" style="left:367px">Name</div>
<div class="th" style="left:735px">Indicators</div>
<div class="th" style="left:872px">Type</div>
<div class="th" style="left:1036px">State</div>
<div class="hl" style="top:287.0px"></div>
<div class="hl" style="top:332.0px"></div>
<div class="hl" style="top:377.0px"></div>
<div class="hl" style="top:422.0px"></div>
<div class="hl" style="top:467.0px"></div>
<div class="hl" style="top:512.0px"></div>
<div class="hl" style="top:557.0px"></div>
<div class="hl" style="top:602.0px"></div>
<div class="hl" style="top:647.0px"></div>
<div class="abs" style="left:680.5px;top:197px;width:1.5px;height:451px;background:#d9d9d9"></div>
<div class="abs" style="left:789px;top:197px;width:1px;height:451px;background:#d9d9d9"></div>
<div class="abs" style="left:953px;top:197px;width:1px;height:451px;background:#d9d9d9"></div>
<div class="abs" style="left:75px;top:272px;width:1px;height:353px;background:#a8a8a8"></div>
<div class="abs" style="left:96px;top:497px;width:1px;height:83px;background:#a8a8a8"></div>
<div class="abs" style="left:76px;top:309px;width:21px;height:1px;background:repeating-linear-gradient(90deg,#999 0 3px,transparent 3px 5px)"></div>
<div class="abs" style="left:76px;top:354px;width:21px;height:1px;background:repeating-linear-gradient(90deg,#999 0 3px,transparent 3px 5px)"></div>
<div class="abs" style="left:76px;top:399px;width:21px;height:1px;background:repeating-linear-gradient(90deg,#999 0 3px,transparent 3px 5px)"></div>
<div class="abs" style="left:76px;top:444px;width:21px;height:1px;background:repeating-linear-gradient(90deg,#999 0 3px,transparent 3px 5px)"></div>
<div class="abs" style="left:76px;top:489px;width:14px;height:1px;background:repeating-linear-gradient(90deg,#999 0 3px,transparent 3px 5px)"></div>
<div class="abs" style="left:97px;top:534px;width:12px;height:1px;background:repeating-linear-gradient(90deg,#999 0 3px,transparent 3px 5px)"></div>
<div class="abs" style="left:97px;top:579px;width:12px;height:1px;background:repeating-linear-gradient(90deg,#999 0 3px,transparent 3px 5px)"></div>
<div class="abs" style="left:75px;top:624px;width:15px;height:1px;background:#a8a8a8"></div>
<div class="exp" style="left:70px;top:258.0px"></div>
<div class="abs" style="left:73.7px;top:261.9px;width:5.500px;height:2.200px;background:#c4cbe0;border-radius:.5px"></div>
<div class="cb" style="left:89.3px;top:256.8px;width:15.500px;height:15.500px"></div>
<svg style="left:115.5px;top:256.2px" width="17" height="17" viewBox="0 0 17 17" fill="none" stroke="#4452a4" stroke-width="1.5" stroke-linecap="round" stroke-linejoin="round"><circle cx="8.500" cy="8.500" r="7.300" stroke-width="1.600"/><circle cx="8.500" cy="8.500" r="2.500" stroke-width="1.700"/></svg>
<div class="cb" style="left:109.3px;top:302.3px;width:15.500px;height:15.500px"></div>
<svg style="left:135.8px;top:301.7px" width="17" height="17" viewBox="0 0 17 17" fill="none" stroke="#4452a4" stroke-width="1.5" stroke-linecap="round" stroke-linejoin="round"><path d="M7 10.800H1.500V1.500H15.500V5" stroke-width="2"/><circle cx="13.700" cy="6.800" r="1" fill="#4452a4" stroke-width=".8"/><path d="M8.500 8L13.700 10.300V16" stroke-width="2.200"/></svg>
<div class="cb" style="left:109.3px;top:347.3px;width:15.500px;height:15.500px"></div>
<svg style="left:134.2px;top:345.5px" width="20" height="19" viewBox="0 0 20 19" fill="none" stroke="#4452a4" stroke-width="1.5" stroke-linecap="round" stroke-linejoin="round"><rect x="1.100" y="1.100" width="17.800" height="16.800" rx="2.800" stroke-width="1.900"/><path d="M10 5V14M6.200 7.300L13.800 11.700M13.800 7.300L6.200 11.700" stroke-width="1.800"/></svg>
<div class="cb" style="left:109.3px;top:392.3px;width:15.500px;height:15.500px"></div>
<svg style="left:135px;top:390.5px" width="19" height="19" viewBox="0 0 19 19" fill="none" stroke="#4452a4" stroke-width="1.5" stroke-linecap="round" stroke-linejoin="round"><path d="M7.300 1V18M1 5.800L7.300 13.200M1 13.200L7.300 5.800" stroke-width="1.800"/><path d="M9.500 1.300L18 5V14L9.500 17.700Z" stroke-width="1.900"/></svg>
<div class="cb" style="left:109.3px;top:437.3px;width:15.500px;height:15.500px"></div>
<svg style="left:135.8px;top:436.7px" width="17" height="17" viewBox="0 0 17 17" fill="none" stroke="#4452a4" stroke-width="1.5" stroke-linecap="round" stroke-linejoin="round"><rect x="1.200" y="3" width="14.600" height="13" rx="1.600" stroke-width="1.900"/><path d="M1.200 7.200H15.800M5 1V4.500M12 1V4.500" stroke-width="1.800"/><path d="M5 11.400L7.500 13.700L12 9.400" stroke-width="1.700"/></svg>
<div class="exp" style="left:90px;top:483.5px"></div>
<div class="abs" style="left:93.7px;top:487.4px;width:5.500px;height:2.200px;background:#c4cbe0;border-radius:.5px"></div>
<div class="cb" style="left:109.3px;top:482.3px;width:15.500px;height:15.500px"></div>
<svg style="left:135.8px;top:481.7px" width="17" height="17" viewBox="0 0 17 17" fill="none" stroke="#4452a4" stroke-width="1.5" stroke-linecap="round" stroke-linejoin="round"><path d="M8 1L14.500 4.500V8M8 1L1.500 4.500V12L8 15.500L9 15M1.500 4.500L8 8L14.500 4.500M8 8V15.500" stroke-width="1.200"/><circle cx="13" cy="13" r="3.800" fill="#4452a4" stroke="none"/><path d="M11.200 12.600A1.900 1.900 0 0 1 14.600 12M14.800 13.400A1.900 1.900 0 0 1 11.400 14" stroke="#fff" stroke-width=".9"/></svg>
<div class="exp" style="left:110px;top:528.0px"></div>
<svg style="left:110px;top:528.0px" width="13" height="13" viewBox="0 0 13 13" stroke="#e8ebf5" stroke-width="2"><path d="M6.500 2.800V8.800M3.500 5.800H9.500"/></svg>
<div class="cb" style="left:129.5px;top:527.3px;width:15.500px;height:15.500px"></div>
<svg style="left:129.5px;top:527.3px" width="16" height="16" viewBox="0 0 16 16" fill="none" stroke="#2a64b8" stroke-width="1.500" stroke-linecap="round" stroke-linejoin="round"><path d="M3.300 8.300L6.300 11.200L12.300 4.800"/></svg>
<svg style="left:154.5px;top:526.0px" width="19" height="18" viewBox="0 0 19 18" fill="none" stroke="#4452a4" stroke-width="1.5" stroke-linecap="round" stroke-linejoin="round"><path d="M3.500 4A8 8 0 0 1 17 7M17.200 11.500A8 8 0 0 1 3 14.500" stroke-width="1.400"/><path d="M1 7H11.500M13 7L7 12.500M5.500 12.500H17.500M15.800 10.800L17.500 12.500L15.800 14.200" stroke-width="1.200"/><circle cx="5.500" cy="7" r="1.100" fill="#fff" stroke-width="1"/><circle cx="12.500" cy="7" r="1.100" fill="#fff" stroke-width="1"/><circle cx="6.500" cy="12.500" r="1.100" fill="#fff" stroke-width="1"/></svg>
<div class="exp" style="left:110px;top:573.0px"></div>
<svg style="left:110px;top:573.0px" width="13" height="13" viewBox="0 0 13 13" stroke="#e8ebf5" stroke-width="2"><path d="M6.500 2.800V8.800M3.500 5.800H9.500"/></svg>
<div class="cb" style="left:129.5px;top:572.3px;width:15.500px;height:15.500px"></div>
<svg style="left:154.5px;top:571.0px" width="19" height="18" viewBox="0 0 19 18" fill="none" stroke="#4452a4" stroke-width="1.5" stroke-linecap="round" stroke-linejoin="round"><path d="M3 5A7.600 7.600 0 0 1 16.500 6.500M16 12.500A7.600 7.600 0 0 1 2.500 11.500" stroke-width="1.400"/><path d="M1 3.500L3 5.300L4.800 3.300M17.800 14L16 12.300L14.200 14.200" stroke-width="1.300"/><circle cx="9.500" cy="9" r="4.300" stroke-width="1.300"/><path d="M9.500 9V13M9.500 9L6 7M9.500 9L13 7" stroke-width="1.100"/></svg>
<div class="exp" style="left:90px;top:618.5px"></div>
<svg style="left:90px;top:618.5px" width="13" height="13" viewBox="0 0 13 13" stroke="#e8ebf5" stroke-width="2"><path d="M6.500 2.800V8.800M3.500 5.800H9.500"/></svg>
<div class="cb" style="left:109.3px;top:617.3px;width:15.500px;height:15.500px"></div>
<svg style="left:135.8px;top:616.7px" width="17" height="17" viewBox="0 0 17 17" fill="none" stroke="#4452a4" stroke-width="1.5" stroke-linecap="round" stroke-linejoin="round"><path d="M5.54 2.16A7 7 0 0 0 5.54 14.84M11.46 14.84A7 7 0 0 0 11.46 2.16" stroke-width="1.700"/><path d="M1.94 2.46H5.74V6.06M15.06 14.54H11.26V10.94" stroke-width="1.500"/><path d="M5.300 8.800L7.700 11.200L12 6.500" stroke-width="1.500"/></svg>
<div id="nclip"><div class="nm" style="left:138.5px;top:11px">Wires got in the way of moving parts during assembly (A) <b style="letter-spacing:.5px;color:#35429a">(1)</b></div><div class="nm" style="left:159px;top:56.5px">Plan wire paths clearly to keep them safe and tidy (A)</div><div class="nm" style="left:159px;top:101.5px">Improper cable routing may cause wear and damage from contact with</div><div class="nm" style="left:159px;top:146.5px">This could lead to malfunctioning features, safety hazards, and custom</div><div class="nm" style="left:159px;top:191.5px">Add routing clips to secure wires and prevent interference with moving</div><div class="nm" style="left:159px;top:236.5px">Change request - 7466 (A)</div><div class="nm" style="left:179px;top:281.5px">Wire Routing and Assembly Safety Optimization Workflow (A) <b style="letter-spacing:.5px;color:#35429a">(34)</b></div><div class="nm" style="left:179px;top:326.5px">Change order - 5866 (A)</div><div class="nm" style="left:159px;top:371.5px">Change Task - 795 (A)</div></div>
<svg style="left:685.500px;top:258.3px" width="16" height="12" viewBox="0 0 16 12" fill="none" stroke="#17801c" stroke-width="1.800" stroke-linecap="square"><path d="M1.500 6.300L5.300 10L14 1.500"/></svg>
<svg style="left:704.5px;top:255px" width="19" height="18" viewBox="0 0 19 18" fill="none" stroke="#f4a62a" stroke-linecap="round" stroke-linejoin="round"><path d="M3.300 4A8 8 0 0 1 17 6.500M17.500 11.500A8 8 0 0 1 3 14" stroke-width="1.500"/><path d="M1 6.500H11.500M13 6.500L7 12M5.500 12H17.500M15.800 10.300L17.500 12L15.800 13.700" stroke-width="1.300"/><circle cx="6" cy="6.500" r="1" fill="#f4a62a" stroke-width=".6"/><circle cx="12.800" cy="6.500" r="1" fill="#f4a62a" stroke-width=".6"/><circle cx="6.500" cy="12" r="1" fill="#f4a62a" stroke-width=".6"/></svg>
<svg style="left:725.1px;top:255px" width="18" height="18" viewBox="0 0 18 18" fill="none" stroke="#e01212" stroke-linecap="round"><circle cx="9" cy="9" r="7.400" stroke-width="1.800"/><path d="M5.800 10.500A3.400 3.400 0 0 1 9.500 5.600M12.200 7.500A3.400 3.400 0 0 1 8.500 12.400" stroke-width="1.500"/><path d="M8.300 4.200L10 5.700L8.400 7.200M9.700 13.800L8 12.300L9.600 10.800" stroke-width="1.200" stroke-linejoin="round"/></svg>
<svg style="left:745.1px;top:255px" width="18" height="18" viewBox="0 0 18 18" fill="none" stroke="#e01212" stroke-linecap="round"><circle cx="9" cy="9" r="7.400" stroke-width="1.800"/><path d="M5.800 10.500A3.400 3.400 0 0 1 9.500 5.600M12.200 7.500A3.400 3.400 0 0 1 8.500 12.400" stroke-width="1.500"/><path d="M8.300 4.200L10 5.700L8.400 7.200M9.700 13.800L8 12.300L9.600 10.800" stroke-width="1.200" stroke-linejoin="round"/></svg>
<svg style="left:765.2px;top:255px" width="18" height="18" viewBox="0 0 18 18" fill="none" stroke="#8a8a8a" stroke-width="1.300" stroke-linecap="round"><path d="M11.500 5.500L6 11A1.700 1.700 0 0 0 8.400 13.400L15 6.800A3.300 3.300 0 0 0 10.300 2.100L3.200 9.200A4.900 4.900 0 0 0 10.100 16.100L14.500 11.700" transform="rotate(4 9 9)"/></svg>
<svg style="left:685.500px;top:303.3px" width="16" height="12" viewBox="0 0 16 12" fill="none" stroke="#17801c" stroke-width="1.800" stroke-linecap="square"><path d="M1.500 6.300L5.300 10L14 1.500"/></svg>
<svg style="left:685.500px;top:348.3px" width="16" height="12" viewBox="0 0 16 12" fill="none" stroke="#17801c" stroke-width="1.800" stroke-linecap="square"><path d="M1.500 6.300L5.300 10L14 1.500"/></svg>
<svg style="left:685.500px;top:393.3px" width="16" height="12" viewBox="0 0 16 12" fill="none" stroke="#17801c" stroke-width="1.800" stroke-linecap="square"><path d="M1.500 6.300L5.300 10L14 1.500"/></svg>
<svg style="left:705.2px;top:390px" width="18" height="18" viewBox="0 0 18 18" fill="none" stroke="#e01212" stroke-linecap="butt"><path d="M9 1.300A7.700 7.700 0 0 1 9 16.700" stroke-width="1.650"/><path d="M9 16.700A7.700 7.700 0 0 1 9 1.300" stroke-width="1.650" stroke-dasharray="2.700 1.700"/><path d="M9 4.800V9.300L12 11" stroke-width="1.500" stroke-linecap="round" stroke-linejoin="round"/></svg>
<svg style="left:685.500px;top:438.3px" width="16" height="12" viewBox="0 0 16 12" fill="none" stroke="#17801c" stroke-width="1.800" stroke-linecap="square"><path d="M1.500 6.300L5.300 10L14 1.500"/></svg>
<svg style="left:705.2px;top:435px" width="18" height="18" viewBox="0 0 18 18" fill="none" stroke="#e01212" stroke-linecap="butt"><path d="M9 1.300A7.700 7.700 0 0 1 9 16.700" stroke-width="1.650"/><path d="M9 16.700A7.700 7.700 0 0 1 9 1.300" stroke-width="1.650" stroke-dasharray="2.700 1.700"/><path d="M9 4.800V9.300L12 11" stroke-width="1.500" stroke-linecap="round" stroke-linejoin="round"/></svg>
<svg style="left:685.500px;top:483.3px" width="16" height="12" viewBox="0 0 16 12" fill="none" stroke="#17801c" stroke-width="1.800" stroke-linecap="square"><path d="M1.500 6.300L5.300 10L14 1.500"/></svg>
<svg style="left:705.2px;top:480px" width="18" height="18" viewBox="0 0 18 18" fill="none" stroke="#e01212" stroke-linecap="round"><circle cx="9" cy="9" r="7.400" stroke-width="1.800"/><path d="M5.800 10.500A3.400 3.400 0 0 1 9.500 5.600M12.200 7.500A3.400 3.400 0 0 1 8.500 12.400" stroke-width="1.500"/><path d="M8.300 4.200L10 5.700L8.400 7.200M9.700 13.800L8 12.300L9.600 10.800" stroke-width="1.200" stroke-linejoin="round"/></svg>
<svg style="left:725.2px;top:480px" width="18" height="18" viewBox="0 0 18 18" fill="none" stroke="#e01212" stroke-linecap="round"><circle cx="9" cy="9" r="7.400" stroke-width="1.800"/><path d="M5.800 10.500A3.400 3.400 0 0 1 9.500 5.600M12.200 7.500A3.400 3.400 0 0 1 8.500 12.400" stroke-width="1.500"/><path d="M8.300 4.200L10 5.700L8.400 7.200M9.700 13.800L8 12.300L9.600 10.800" stroke-width="1.200" stroke-linejoin="round"/></svg>
<svg style="left:744.5px;top:480px" width="19" height="18" viewBox="0 0 19 18" fill="none" stroke="#e01212" stroke-linecap="round" stroke-linejoin="round"><path d="M3.300 4A8 8 0 0 1 17 6.500M17.500 11.500A8 8 0 0 1 3 14" stroke-width="1.500"/><path d="M1 6.500H11.500M13 6.500L7 12M5.500 12H17.500M15.800 10.300L17.500 12L15.800 13.700" stroke-width="1.300"/><circle cx="6" cy="6.500" r="1" fill="#e01212" stroke-width=".6"/><circle cx="12.800" cy="6.500" r="1" fill="#e01212" stroke-width=".6"/><circle cx="6.500" cy="12" r="1" fill="#e01212" stroke-width=".6"/></svg>
<svg style="left:765.2px;top:480px" width="18" height="18" viewBox="0 0 18 18" fill="none" stroke="#e01212" stroke-linecap="butt"><path d="M9 1.300A7.700 7.700 0 0 1 9 16.700" stroke-width="1.650"/><path d="M9 16.700A7.700 7.700 0 0 1 9 1.300" stroke-width="1.650" stroke-dasharray="2.700 1.700"/><path d="M9 4.800V9.300L12 11" stroke-width="1.500" stroke-linecap="round" stroke-linejoin="round"/></svg>
<svg style="left:685.500px;top:528.5px" width="16" height="12" viewBox="0 0 16 12" fill="none" stroke="#17801c" stroke-width="1.800" stroke-linecap="square"><path d="M1.500 6.300L5.300 10L14 1.500"/></svg>
<svg style="left:707.5px;top:527.0px" width="14" height="15" viewBox="0 0 14 15"><path d="M0.500 0.800H2.300V15H0.500Z" fill="#111"/><path d="M2.300 1.200Q5 0 7.500 1.200T13.200 1.200V8.200Q10.500 9.400 7.800 8.200T2.300 8.200Z" fill="#111"/><g fill="#fff"><rect x="3.400" y="2.500" width="1.500" height="1.500"/><rect x="6.800" y="2.700" width="1.500" height="1.500"/><rect x="5.100" y="4.300" width="1.500" height="1.500"/><rect x="8.600" y="4.400" width="1.500" height="1.500"/><rect x="3.400" y="6" width="1.500" height="1.300"/><rect x="6.900" y="6.200" width="1.500" height="1.400"/></g></svg>
<svg style="left:726.2px;top:526px" width="16" height="16" viewBox="0 0 16 16" fill="none" stroke="#3b8ff0" stroke-width="1.300"><rect x=".8" y=".8" width="14.400" height="14.400" rx="2.300" fill="#cfe6ff"/><rect x="3.500" y="3.500" width="9" height="3.300" rx=".8" fill="#fff"/><path d="M3.500 9.300H8M3.500 11.800H8" stroke-width="1.100"/><rect x="10" y="9.800" width="2.300" height="2.300" rx=".5" fill="#fff" stroke-width="1"/></svg>
<svg style="left:745.2px;top:525.2px" width="18" height="18" viewBox="0 0 18 18" fill="none" stroke="#0b0bd0" stroke-linecap="butt"><path d="M9 1.300A7.700 7.700 0 0 1 9 16.700" stroke-width="1.650"/><path d="M9 16.700A7.700 7.700 0 0 1 9 1.300" stroke-width="1.650" stroke-dasharray="2.700 1.700"/><path d="M9 4.800V9.300L12 11" stroke-width="1.500" stroke-linecap="round" stroke-linejoin="round"/></svg>
<svg style="left:685.500px;top:573.3px" width="16" height="12" viewBox="0 0 16 12" fill="none" stroke="#17801c" stroke-width="1.800" stroke-linecap="square"><path d="M1.500 6.300L5.300 10L14 1.500"/></svg>
<svg style="left:705.2px;top:570px" width="18" height="18" viewBox="0 0 18 18" fill="none" stroke="#e01212" stroke-linecap="round"><circle cx="9" cy="9" r="7.400" stroke-width="1.800"/><path d="M5.800 10.500A3.400 3.400 0 0 1 9.500 5.600M12.200 7.500A3.400 3.400 0 0 1 8.500 12.400" stroke-width="1.500"/><path d="M8.300 4.200L10 5.700L8.400 7.200M9.700 13.800L8 12.300L9.600 10.800" stroke-width="1.200" stroke-linejoin="round"/></svg>
<svg style="left:725.2px;top:570px" width="18" height="18" viewBox="0 0 18 18" fill="none" stroke="#e01212" stroke-linecap="round"><circle cx="9" cy="9" r="7.400" stroke-width="1.800"/><path d="M5.800 10.500A3.400 3.400 0 0 1 9.500 5.600M12.200 7.500A3.400 3.400 0 0 1 8.500 12.400" stroke-width="1.500"/><path d="M8.300 4.200L10 5.700L8.400 7.200M9.700 13.800L8 12.300L9.600 10.800" stroke-width="1.200" stroke-linejoin="round"/></svg>
<svg style="left:744.5px;top:570px" width="19" height="18" viewBox="0 0 19 18" fill="none" stroke="#e01212" stroke-linecap="round" stroke-linejoin="round"><path d="M3.300 4A8 8 0 0 1 17 6.500M17.500 11.500A8 8 0 0 1 3 14" stroke-width="1.500"/><path d="M1 6.500H11.500M13 6.500L7 12M5.500 12H17.500M15.800 10.300L17.500 12L15.800 13.700" stroke-width="1.300"/><circle cx="6" cy="6.500" r="1" fill="#e01212" stroke-width=".6"/><circle cx="12.800" cy="6.500" r="1" fill="#e01212" stroke-width=".6"/><circle cx="6.500" cy="12" r="1" fill="#e01212" stroke-width=".6"/></svg>
<svg style="left:765.2px;top:570px" width="18" height="18" viewBox="0 0 18 18" fill="none" stroke="#e01212" stroke-linecap="butt"><path d="M9 1.300A7.700 7.700 0 0 1 9 16.700" stroke-width="1.650"/><path d="M9 16.700A7.700 7.700 0 0 1 9 1.300" stroke-width="1.650" stroke-dasharray="2.700 1.700"/><path d="M9 4.800V9.300L12 11" stroke-width="1.500" stroke-linecap="round" stroke-linejoin="round"/></svg>
<svg style="left:685.500px;top:618.3px" width="16" height="12" viewBox="0 0 16 12" fill="none" stroke="#17801c" stroke-width="1.800" stroke-linecap="square"><path d="M1.500 6.300L5.300 10L14 1.500"/></svg>
<svg style="left:707.5px;top:617.0px" width="14" height="15" viewBox="0 0 14 15"><path d="M0.500 0.800H2.300V15H0.500Z" fill="#111"/><path d="M2.300 1.200Q5 0 7.500 1.200T13.200 1.200V8.200Q10.500 9.400 7.800 8.200T2.300 8.200Z" fill="#111"/><g fill="#fff"><rect x="3.400" y="2.500" width="1.500" height="1.500"/><rect x="6.800" y="2.700" width="1.500" height="1.500"/><rect x="5.100" y="4.300" width="1.500" height="1.500"/><rect x="8.600" y="4.400" width="1.500" height="1.500"/><rect x="3.400" y="6" width="1.500" height="1.300"/><rect x="6.900" y="6.200" width="1.500" height="1.400"/></g></svg>
<svg style="left:725.2px;top:615px" width="18" height="18" viewBox="0 0 18 18" fill="none" stroke="#e01212" stroke-linecap="round"><circle cx="9" cy="9" r="7.400" stroke-width="1.800"/><path d="M5.800 10.500A3.400 3.400 0 0 1 9.500 5.600M12.200 7.500A3.400 3.400 0 0 1 8.500 12.400" stroke-width="1.500"/><path d="M8.300 4.200L10 5.700L8.400 7.200M9.700 13.800L8 12.300L9.600 10.800" stroke-width="1.200" stroke-linejoin="round"/></svg>
<svg style="left:745.2px;top:615px" width="18" height="18" viewBox="0 0 18 18" fill="none" stroke="#e01212" stroke-linecap="round"><circle cx="9" cy="9" r="7.400" stroke-width="1.800"/><path d="M5.800 10.500A3.400 3.400 0 0 1 9.500 5.600M12.200 7.500A3.400 3.400 0 0 1 8.500 12.400" stroke-width="1.500"/><path d="M8.300 4.200L10 5.700L8.400 7.200M9.700 13.800L8 12.300L9.600 10.800" stroke-width="1.200" stroke-linejoin="round"/></svg>
<svg style="left:765.2px;top:615px" width="18" height="18" viewBox="0 0 18 18" fill="none" stroke="#e01212" stroke-linecap="butt"><path d="M9 1.300A7.700 7.700 0 0 1 9 16.700" stroke-width="1.650"/><path d="M9 16.700A7.700 7.700 0 0 1 9 1.300" stroke-width="1.650" stroke-dasharray="2.700 1.700"/><path d="M9 4.800V9.300L12 11" stroke-width="1.500" stroke-linecap="round" stroke-linejoin="round"/></svg>
<div class="ty" style="top:254.3px">Issue</div>
<div class="ty" style="top:299.8px">Lessons Learned</div>
<div class="ty" style="top:344.8px">Risk</div>
<div class="ty" style="top:389.8px">Impact</div>
<div class="ty" style="top:434.8px">Implementation Plan</div>
<div class="ty" style="top:479.8px">Change Request</div>
<div class="ty" style="top:524.8px;color:#2b2f38">Workflow</div>
<div class="ty" style="top:569.8px">Change Order</div>
<div class="ty" style="top:614.8px">Change Task</div>
<div class="badge" style="top:252.5px;width:92px;background:#56b45b">Completed</div>
<div class="badge" style="top:298.0px;width:64px;background:#cfcfcf">Default</div>
<div class="badge" style="top:343.0px;width:82px;background:#fbc645">In Review</div>
<div class="badge" style="top:388.0px;width:82px;background:#fbc645">In Review</div>
<div class="badge" style="top:433.0px;width:64px;background:#cfcfcf">Default</div>
<div class="badge" style="top:478.0px;width:74px;background:#ef5350">Stopped</div>
<div class="badge" style="top:523.0px;width:92px;background:#56b45b">Completed</div>
<div class="badge" style="top:568.0px;width:92px;background:#56b45b">Completed</div>
<div class="badge" style="top:613.0px;width:92px;background:#56b45b">Completed</div>
<div class="abs" style="left:1079px;top:576px;width:18px;height:36px;background:#939398;border-radius:4px 0 0 4px"></div>
<svg style="left:1084px;top:587px" width="8" height="12" viewBox="0 0 8 12" fill="none" stroke="#fff" stroke-width="1.300" stroke-linecap="round" stroke-linejoin="round"><path d="M1.500 1.500L6 6L1.500 10.500"/></svg>
<div class="abs" style="left:1098px;top:253.500px;width:811px;height:1.500px;background:#e6e6e6"></div>
<svg style="left:1118px;top:209px" width="16" height="16" viewBox="0 0 16 16" fill="none" stroke="#4f5566" stroke-width="1.5" stroke-linecap="round" stroke-linejoin="round"><path d="M6.500 2.500H3Q1 2.500 1 4.500V13Q1 15 3 15H11Q13 15 13 13V9.500"/><path d="M7.500 8.500L15 1M10 1H15V6"/></svg>
<svg style="left:1138px;top:217px" width="10" height="7" viewBox="0 0 10 7" fill="none" stroke="#4f5566" stroke-width="1.900" stroke-linecap="round" stroke-linejoin="round"><path d="M1 1L5 5L9 1"/></svg>
<div class="rtl" style="left:1128.5px;top:234px;color:#3a3f4c;-webkit-text-stroke:.15px #3a3f4c">Open</div>
<div class="abs" style="left:1158px;top:201px;width:1px;height:48px;background:#dcdcdc"></div>
<svg style="left:1177px;top:208px" width="18" height="17" viewBox="0 0 18 17" fill="none" stroke="#4f5566" stroke-width="1.6" stroke-linecap="round" stroke-linejoin="round"><path d="M4 12.500L4.800 9.300L12.500 1.600A1.500 1.500 0 0 1 14.700 3.800L7 11.500Z" stroke-width="1.300"/><path d="M11 3L13.200 5.200" stroke-width="1.100"/><path d="M.8 16H17.200" stroke-width="1.100"/></svg>
<div class="rtl" style="left:1184.5px;top:234px;color:#3a3f4c;-webkit-text-stroke:.15px #3a3f4c">Edit</div>
<svg style="left:1214.5px;top:209.5px" width="16" height="16" viewBox="0 0 16 16" fill="none" stroke="#c6c8d0" stroke-width="1.3" stroke-linecap="round" stroke-linejoin="round"><rect x=".8" y=".8" width="14.400" height="14.400" rx="2"/><path d="M4 1V5H11V1" fill="#c6c8d0"/><circle cx="8" cy="10.500" r="1.600" fill="#c6c8d0"/></svg>
<div class="rtl" style="left:1220.5px;top:234px;color:#b9bbc4;-webkit-text-stroke:.15px #b9bbc4">Save</div>
<svg style="left:1253px;top:209.5px" width="16" height="16" viewBox="0 0 16 16" fill="none" stroke="#4f5566" stroke-width="1.6" stroke-linecap="round" stroke-linejoin="round"><path d="M8 14V3" stroke-width="1.600"/><path d="M5 5L8 1.500L11 5Z" fill="#4f5566" stroke-width="1"/><path d="M1 14.500H15M3.500 9.500H6M10 9.500H12.500" stroke-width="1.400"/></svg>
<div class="rtl" style="left:1260px;top:234px;color:#3a3f4c;-webkit-text-stroke:.15px #3a3f4c">Promote</div>
<svg style="left:1294px;top:209px" width="16" height="16" viewBox="0 0 16 16" fill="none" stroke="#4f5566" stroke-width="1.6" stroke-linecap="round" stroke-linejoin="round"><path d="M8 1.500V12" stroke-width="1.600"/><path d="M5 11L8 14.500L11 11Z" fill="#4f5566" stroke-width="1"/><path d="M1 1.500H15M3.500 6.500H6M10 6.500H12.500" stroke-width="1.400"/></svg>
<div class="rtl" style="left:1301px;top:234px;color:#3a3f4c;-webkit-text-stroke:.15px #3a3f4c">Demote</div>
<svg style="left:1333.5px;top:209.5px" width="16" height="16" viewBox="0 0 16 16" fill="none" stroke="#4f5566" stroke-width="1.6" stroke-linecap="round" stroke-linejoin="round"><path d="M1.500 15.500V2Q5 .5 8 2T14.500 2V10.500Q11.500 12 8 10.500T1.500 10.500" stroke-width="1.300"/><path d="M5.800 1.300V10M10.200 2.800V11.300M1.500 6.300Q5 4.800 8 6.300T14.500 6.300" stroke-width="1"/></svg>
<div class="rtl" style="left:1340.3px;top:234px;color:#3a3f4c;-webkit-text-stroke:.15px #3a3f4c">Finalize</div>
<svg style="left:1372px;top:210px" width="15" height="15" viewBox="0 0 15 15" fill="none" stroke="#4f5566" stroke-width="1.6" stroke-linecap="round" stroke-linejoin="round"><path d="M7.500 14.500V9.500C7.500 6.500 4.500 5.500 2 2.500M1.500 6V2H5.500" stroke-width="1.600"/><path d="M7.500 9.500C7.500 6.500 10.500 5.500 13 2.500M9.500 2H13.500V6" stroke-width="1.600"/></svg>
<div class="rtl" style="left:1377.5px;top:234px;color:#3a3f4c;-webkit-text-stroke:.15px #3a3f4c">Revise</div>
<svg style="left:1404.800px;top:206.200px" width="22.500" height="22.500" viewBox="0 0 24 24" fill="#4f5566"><path d="M17.650 6.350C16.200 4.900 14.210 4 12 4c-4.420 0-7.990 3.580-7.990 8s3.570 8 7.990 8c3.730 0 6.840-2.550 7.730-6h-2.080c-.82 2.330-3.040 4-5.650 4-3.310 0-6-2.690-6-6s2.690-6 6-6c1.660 0 3.140.690 4.220 1.780L13 11h7V4l-2.350 2.350z"/></svg>
<div class="rtl" style="left:1415px;top:234px;color:#3a3f4c;-webkit-text-stroke:.15px #3a3f4c">Refresh</div>
<svg style="left:1874.5px;top:209.5px" width="15" height="14" viewBox="0 0 15 14" fill="none" stroke="#2c2f38" stroke-width="1.5" stroke-linecap="round" stroke-linejoin="round"><rect x="1" y="1" width="13" height="12" rx="1.500"/><path d="M5.300 1V13M9.700 1V13"/></svg>
<div class="rtl" style="left:1882px;top:232.5px;color:#3a3f4c;-webkit-text-stroke:.15px #3a3f4c">Views</div>
<div class="abs" style="left:1104px;top:261px;width:34px;height:34px;border-radius:5px;background:#b5f1e5"></div>
<svg style="left:1111px;top:268px" width="20" height="19" viewBox="0 0 19 18" fill="none" stroke="#0c6e60" stroke-linecap="round" stroke-linejoin="round"><path d="M3.300 4A8 8 0 0 1 17 6.500M17.500 11.500A8 8 0 0 1 3 14" stroke-width="1.500"/><path d="M1 6.500H11.500M13 6.500L7 12M5.500 12H17.500M15.800 10.300L17.500 12L15.800 13.700" stroke-width="1.300"/><circle cx="6" cy="6.500" r="1.100" fill="#b5f1e5" stroke-width="1"/><circle cx="12.800" cy="6.500" r="1.100" fill="#b5f1e5" stroke-width="1"/><circle cx="6.500" cy="12" r="1.100" fill="#b5f1e5" stroke-width="1"/></svg>
<svg style="left:1147.500px;top:270.500px" width="17" height="16.500" viewBox="0 0 19 18" fill="none" stroke="#4553a8" stroke-linecap="round" stroke-linejoin="round"><path d="M3.300 4A8 8 0 0 1 17 6.500M17.500 11.500A8 8 0 0 1 3 14" stroke-width="1.500"/><path d="M1 6.500H11.500M13 6.500L7 12M5.500 12H17.500M15.800 10.300L17.500 12L15.800 13.700" stroke-width="1.300"/><circle cx="6" cy="6.500" r="1.100" fill="#fff" stroke-width="1"/><circle cx="12.800" cy="6.500" r="1.100" fill="#fff" stroke-width="1"/><circle cx="6.500" cy="12" r="1.100" fill="#fff" stroke-width="1"/></svg>
<div class="t" style="left:1171px;top:270.500px;font-size:16px;color:#4656b2;letter-spacing:.15px">Wire Routing and Asse...</div>
<div class="t" style="left:1368.500px;top:270.500px;font-size:16px;color:#4656b2;letter-spacing:.15px">(A)</div>
<svg style="left:1881.500px;top:273px" width="13" height="8" viewBox="0 0 13 8" fill="none" stroke="#111" stroke-width="1.700" stroke-linecap="round" stroke-linejoin="round"><path d="M1 7L6.500 1.500L12 7"/></svg>
<div class="abs" style="left:1098px;top:300.500px;width:811px;height:48px;background:#f2f4f7"></div>
<div class="abs" style="left:1098px;top:348px;width:811px;height:2px;background:#dcdfe5"></div>
<div class="abs" style="left:1691.500px;top:312px;width:105.500px;height:26px;background:#fff;border-radius:4px"></div>
<div class="abs" style="left:1691.500px;top:345.500px;width:105.500px;height:2.500px;background:#1d3a70"></div>
<svg style="left:1112px;top:317px" width="13.500" height="13.500" viewBox="0 0 14 14" fill="none" stroke="#5b606a" stroke-width="1.300" stroke-linecap="round"><circle cx="7" cy="7" r="6"/><path d="M7 6.300V10.200"/><circle cx="7" cy="4" r=".500" fill="#5b606a"/></svg>
<div class="tab" style="left:1131.5px;color:#5b606a;-webkit-text-stroke:.45px #5b606a">Information</div>
<svg style="left:1230px;top:316.500px" width="15" height="15" viewBox="0 0 15 15" fill="none" stroke="#5b606a" stroke-width="1.400" stroke-linecap="round" stroke-linejoin="round"><path d="M1.96 5.48A5.9 5.9 0 0 1 11.29 2.98M12.61 4.55A5.9 5.9 0 0 1 8.52 13.31M6.48 13.31A5.9 5.9 0 0 1 1.69 6.48"/><path d="M11.29 2.98L8.73 2.53M11.29 2.98L10.40 0.54M8.52 13.31L10.52 11.64M8.52 13.31L10.97 14.20M1.69 6.48L2.58 8.92M1.69 6.48L0.02 8.47" stroke-width="1.200"/></svg>
<div class="tab" style="left:1256.5px;color:#5b606a;-webkit-text-stroke:.45px #5b606a">Lifecycle</div>
<svg style="left:1341px;top:319px" width="14" height="9" viewBox="0 0 14 9" fill="none" stroke="#5b606a" stroke-width="1.400" stroke-linecap="round"><path d="M6 1H4.300A3.300 3.300 0 0 0 4.300 7.600H6M8 1H9.700A3.300 3.300 0 0 1 9.700 7.600H8M4.500 4.300H9.500"/></svg>
<div class="tab" style="left:1366.5px;color:#5b606a;-webkit-text-stroke:.45px #5b606a">Relations</div>
<svg style="left:1458px;top:317px" width="14" height="14" viewBox="0 0 14 14" fill="none" stroke="#5b606a" stroke-width="1.300" stroke-linecap="round" stroke-linejoin="round"><path d="M2.300 4A5.800 5.800 0 1 1 1.500 8"/><path d="M1.500 1.500V4.500H4.500"/><path d="M7.200 4.300V7.300L9.200 9"/></svg>
<div class="tab" style="left:1483px;color:#5b606a;-webkit-text-stroke:.45px #5b606a">History</div>
<svg style="left:1561.500px;top:316.500px" width="15" height="14" viewBox="0 0 15 14" fill="none" stroke="#5b606a" stroke-width="1.300" stroke-linecap="round"><circle cx="5.500" cy="4" r="2.500"/><path d="M1 12.500C1 9.500 3 8.300 5.500 8.300S10 9.500 10 12.500Z"/><circle cx="11" cy="4.500" r="1.800"/><path d="M11.500 8.500C13 8.700 14 9.800 14 12"/></svg>
<div class="tab" style="left:1586.5px;color:#5b606a;-webkit-text-stroke:.45px #5b606a">Collaboration</div>
<svg style="left:1702px;top:317px" width="12.500" height="14" viewBox="0 0 12.500 14" fill="none" stroke="#1b2d5c" stroke-width="1.400" stroke-linejoin="round"><path d="M1 1H8L11.500 4.500V13H1Z"/><path d="M7.700 1.300V4.800H11.200" stroke-width="1.100"/></svg>
<div class="tab" style="left:1725.5px;color:#1b2d5c;-webkit-text-stroke:.45px #1b2d5c">Summary</div>
<svg style="left:1816px;top:319.500px" width="14" height="9" viewBox="0 0 14 9" fill="none" stroke="#5b606a" stroke-width="1.200" stroke-linecap="round" stroke-linejoin="round"><path d="M4 1L1 4.500L4 8M10 1L13 4.500L10 8"/><path d="M5.800 4.500H5.900M8.100 4.500H8.200" stroke-width="1.400"/></svg>
<div class="tab" style="left:1841px;color:#5b606a;-webkit-text-stroke:.45px #5b606a">Relation</div>
<div class="abs" style="left:1098px;top:350px;width:811px;height:49px;background:#f4f5f7"></div>
<div class="abs" style="left:1102px;top:354.500px;width:678px;height:39px;border:1px solid #dedede;border-radius:5px;background:#fff;box-shadow:0 1px 2px rgba(0,0,0,.05)"></div>
<div class="t" style="left:1113px;top:366.500px;font-size:15.4px;color:#2f2f2f;letter-spacing:.12px">Workflow Summary</div>
<svg style="left:1755px;top:371.500px" width="10" height="5" viewBox="0 0 10 5" fill="#2a2a2a"><path d="M0 0H10L5 5Z"/></svg>
<div class="abs" style="left:1793px;top:357px;width:113px;height:34px;border-radius:8.500px;background:#103a82;box-shadow:0 1px 3px rgba(0,0,0,.3)"></div>
<svg style="left:1818.500px;top:365px" width="18" height="17" viewBox="0 0 18 17" fill="none" stroke="#fff" stroke-width="1.600" stroke-linejoin="round"><path d="M4.500 5.500V1H13.500V5.500"/><rect x="1" y="5.500" width="16" height="7.500" rx="1.500"/><rect x="4.500" y="10" width="9" height="6" fill="#103a82"/></svg>
<div class="t" style="left:1845.500px;top:365.500px;font-size:15.2px;font-weight:bold;color:#fff">Print</div>
<div class="abs" style="left:1886px;top:399px;width:19px;height:624px;background:#fbfbfb"></div><div class="abs" style="left:1905px;top:399px;width:2.500px;height:624px;background:#e5e5e7"></div><div class="abs" style="left:1907.500px;top:399px;width:1.500px;height:624px;background:#deedfb"></div>
<svg style="left:1889px;top:405.500px" width="13" height="9.500" viewBox="0 0 13 9.500" fill="#8c8c8c" stroke="#8c8c8c" stroke-width="1.400" stroke-linejoin="round"><path d="M6.500 1.200L11.800 8.300H1.200Z"/></svg>
<svg style="left:1889px;top:1012.500px" width="13" height="9.500" viewBox="0 0 13 9.500" fill="#8c8c8c" stroke="#8c8c8c" stroke-width="1.400" stroke-linejoin="round"><path d="M6.500 8.300L11.800 1.200H1.200Z"/></svg>
<div class="abs" style="left:1890px;top:495px;width:11px;height:108px;border-radius:6px;background:#8d8d8d"></div>
<div class="rl" style="left:1121px;width:359px;top:402px"></div>
<div class="rl" style="left:1504px;width:360px;top:402px"></div>
<div class="sh" style="top:428px">Lifecycle</div>
<div class="sl" style="top:455.5px"></div>
<div class="k" style="left:1127.5px;top:474px">Lifecycle:</div>
<div class="v" style="left:1321px;top:474px">Workflow Default</div>
<div class="k" style="left:1511.5px;top:474px">Is Final:</div>
<div class="v" style="left:1705px;top:474px">True</div>
<div class="rl" style="left:1121px;width:359px;top:499px"></div>
<div class="rl" style="left:1504px;width:360px;top:499px"></div>
<div class="k" style="left:1127.5px;top:505px">State:</div>
<div class="v" style="left:1321px;top:505px">Completed</div>
<div class="k" style="left:1511.5px;top:505px">Finalized At:</div>
<div class="v" style="left:1705px;top:505px">2025-04-11 11:40:51</div>
<div class="rl" style="left:1121px;width:359px;top:531px"></div>
<div class="rl" style="left:1504px;width:360px;top:531px"></div>
<div class="sh" style="top:557.5px">Workflow Metadata</div>
<div class="sl" style="top:586px"></div>
<div class="k" style="left:1127.5px;top:604px">Workflow ID:</div>
<div class="v" style="left:1321px;top:604px">WF-000970</div>
<div class="rl" style="left:1121px;width:359px;top:629px"></div>
<div class="k" style="left:1127.5px;top:635px">Priority:</div>
<div class="v" style="left:1321px;top:635px">Medium</div>
<div class="rl" style="left:1121px;width:359px;top:660px"></div>
<div class="k" style="left:1127.5px;top:666px">Active Step:</div>
<div class="v" style="left:1321px;top:666px">CCB Review node -<br>411 auto task for test<br>285</div>
<div class="rl" style="left:1121px;width:359px;top:734px"></div>
<div class="k" style="left:1127.5px;top:740px">Checklist:</div>
<div class="v" style="left:1321px;top:740px">Checked and verified</div>
<div class="rl" style="left:1121px;width:359px;top:765px"></div>
<div class="k" style="left:1511.5px;top:604px">Leader:</div>
<div class="v" style="left:1705px;top:604px">None</div>
<div class="rl" style="left:1504px;width:360px;top:640px"></div>
<div class="k" style="left:1511.5px;top:645px">Tags:</div>
<div class="v" style="left:1705px;top:645px">['Test1']</div>
<div class="rl" style="left:1504px;width:360px;top:682px"></div>
<div class="k" style="left:1511.5px;top:687px">Summary:</div>
<div class="v" style="left:1705px;top:687px">None</div>
<div class="rl" style="left:1504px;width:360px;top:723px"></div>
<div class="k" style="left:1511.5px;top:729px">Origin:</div>
<div class="v" style="left:1705px;top:729px">Internal</div>
<div class="rl" style="left:1504px;width:360px;top:765px"></div>
<div class="sh" style="top:792.7px">Timeline</div>
<div class="sl" style="top:820px"></div>
<div class="k" style="left:1127.5px;top:838px">Estimated Start:</div>
<div class="v" style="left:1321px;top:838px">2025-09-<br>30T18:30:00+00:00</div>
<div class="rl" style="left:1121px;width:359px;top:885.5px"></div>
<div class="k" style="left:1127.5px;top:891px">Estimated Completion:</div>
<div class="v" style="left:1321px;top:891px">2025-12-<br>30T18:30:00+00:00</div>
<div class="rl" style="left:1121px;width:359px;top:938px"></div>
<div class="k" style="left:1127.5px;top:943px">Actual Start:</div>
<div class="v" style="left:1321px;top:943px">2025-09-30 18:30:00</div>
<div class="rl" style="left:1121px;width:359px;top:969px"></div>
<div class="k" style="left:1127.5px;top:974px">Completion Date:</div>
<div class="v" style="left:1321px;top:974px">2025-12-23 18:30:00</div>
<div class="rl" style="left:1121px;width:359px;top:1000px"></div>
<div class="k" style="left:1511.5px;top:838px">Completion %:</div>
<div class="v" style="left:1705px;top:838px">75 %</div>
<div class="rl" style="left:1504px;width:360px;top:874px"></div>
<div class="k" style="left:1511.5px;top:880px">Estimated Duration:</div>
<div class="v" style="left:1705px;top:880px">6</div>
<div class="rl" style="left:1504px;width:360px;top:916px"></div>
<div class="k" style="left:1511.5px;top:922px">Actual Duration:</div>
<div class="v" style="left:1705px;top:922px">110.0</div>
<div class="rl" style="left:1504px;width:360px;top:958px"></div>
<div class="k" style="left:1511.5px;top:964px">Needs Approval:</div>
<div class="v" style="left:1705px;top:964px">True</div>
<div class="rl" style="left:1504px;width:360px;top:1000px"></div>
<div class="abs" style="left:56px;top:1019px;width:1026px;height:5px;background:#7d7d7d"></div>
<div class="abs" style="left:502px;top:981px;width:209px;height:41px;border-radius:6px;background:#e02f3f;box-shadow:0 1px 4px rgba(0,0,0,.25)"></div>
<div class="t" style="left:526.500px;top:994px;font-size:16px;color:#fff;letter-spacing:.2px;-webkit-text-stroke:.2px #fff">1 Object Selected</div>
<svg style="left:672.500px;top:996px" width="11" height="11" viewBox="0 0 11 11" stroke="#fff" stroke-width="1.300" stroke-linecap="round"><path d="M1 1L10 10M10 1L1 10"/></svg>
<div class="abs" style="left:1913px;top:558px;width:5px;height:469px;background:#9b9b9b;border-radius:3px 0 0 0"></div>
</body></html>
